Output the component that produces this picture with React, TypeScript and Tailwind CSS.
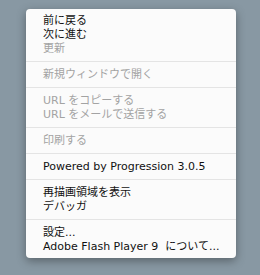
const groups: { label: string; disabled?: boolean }[][] = [
  [{ label: "前に戻る" }, { label: "次に進む" }, { label: "更新", disabled: true }],
  [{ label: "新規ウィンドウで開く", disabled: true }],
  [
    { label: "URL をコピーする", disabled: true },
    { label: "URL をメールで送信する", disabled: true },
  ],
  [{ label: "印刷する", disabled: true }],
  [{ label: "Powered by Progression 3.0.5" }],
  [{ label: "再描画領域を表示" }, { label: "デバッガ" }],
  [{ label: "設定..." }, { label: "Adobe Flash Player 9  について..." }],
];

export default function App() {
  return (
    <div className="h-[275px] w-[260px] bg-[#8898a3] pl-[26px] pt-[9px]">
      <div
        className="w-[210px] rounded-[4px] bg-[#fbfbfb] pb-[5px] pt-[4px] text-[11px] shadow-[0_3px_10px_rgba(0,0,0,0.35)]"
        style={{ fontFamily: '"DejaVu Sans", "Noto Sans CJK JP", sans-serif' }}
      >
        {groups.map((group, gi) => (
          <div key={gi}>
            {gi > 0 && (
              <div className="flex h-[12px] items-center">
                <div className="h-px w-full bg-[#e4e4e4]" />
              </div>
            )}
            {group.map((item) => (
              <div
                key={item.label}
                className={`flex h-[14px] items-center whitespace-pre pl-[17px] leading-none ${
                  item.disabled ? "text-[#a3a3a3]" : "text-[#111]"
                }`}
              >
                {item.label}
              </div>
            ))}
          </div>
        ))}
      </div>
    </div>
  );
}
